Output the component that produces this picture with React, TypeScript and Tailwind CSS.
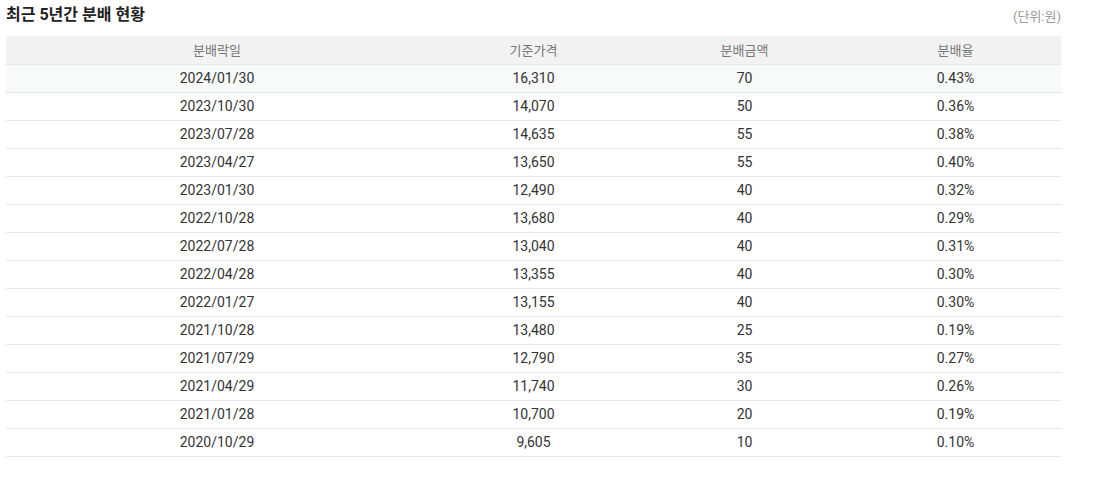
const rows: [string, string, string, string][] = [
  ["2024/01/30", "16,310", "70", "0.43%"],
  ["2023/10/30", "14,070", "50", "0.36%"],
  ["2023/07/28", "14,635", "55", "0.38%"],
  ["2023/04/27", "13,650", "55", "0.40%"],
  ["2023/01/30", "12,490", "40", "0.32%"],
  ["2022/10/28", "13,680", "40", "0.29%"],
  ["2022/07/28", "13,040", "40", "0.31%"],
  ["2022/04/28", "13,355", "40", "0.30%"],
  ["2022/01/27", "13,155", "40", "0.30%"],
  ["2021/10/28", "13,480", "25", "0.19%"],
  ["2021/07/29", "12,790", "35", "0.27%"],
  ["2021/04/29", "11,740", "30", "0.26%"],
  ["2021/01/28", "10,700", "20", "0.19%"],
  ["2020/10/29", "9,605", "10", "0.10%"],
];

export default function App() {
  return (
    <div className="w-[1099px] bg-white pl-[6px] pr-[38px] pt-[4px] font-['Roboto','Noto_Sans_CJK_KR',sans-serif] text-[#333]">
      <div className="flex items-end justify-between pb-[10px]">
        <h3 className="text-[16px] font-bold leading-[22px] text-[#222]">최근 5년간 분배 현황</h3>
        <span className="text-[13px] leading-[18px] text-[#999]">(단위:원)</span>
      </div>
      <table className="w-full table-fixed border-collapse text-center">
        <colgroup>
          <col className="w-[40%]" />
          <col className="w-[20%]" />
          <col className="w-[20%]" />
          <col className="w-[20%]" />
        </colgroup>
        <thead>
          <tr className="h-[28px] border-b border-[#e6e6e6] bg-[#f2f2f2] text-[13px] text-[#777]">
            <th className="pt-px font-normal">분배락일</th>
            <th className="pt-px font-normal">기준가격</th>
            <th className="pt-px font-normal">분배금액</th>
            <th className="pt-px font-normal">분배율</th>
          </tr>
        </thead>
        <tbody className="text-[14px]">
          {rows.map((r, i) => (
            <tr key={r[0]} className={`h-[28px] border-b border-[#e6e6e6] ${i === 0 ? "bg-[#f8f9f9]" : ""}`}>
              {r.map((c, j) => (
                <td key={j} className="pt-px">{c}</td>
              ))}
            </tr>
          ))}
        </tbody>
      </table>
    </div>
  );
}
